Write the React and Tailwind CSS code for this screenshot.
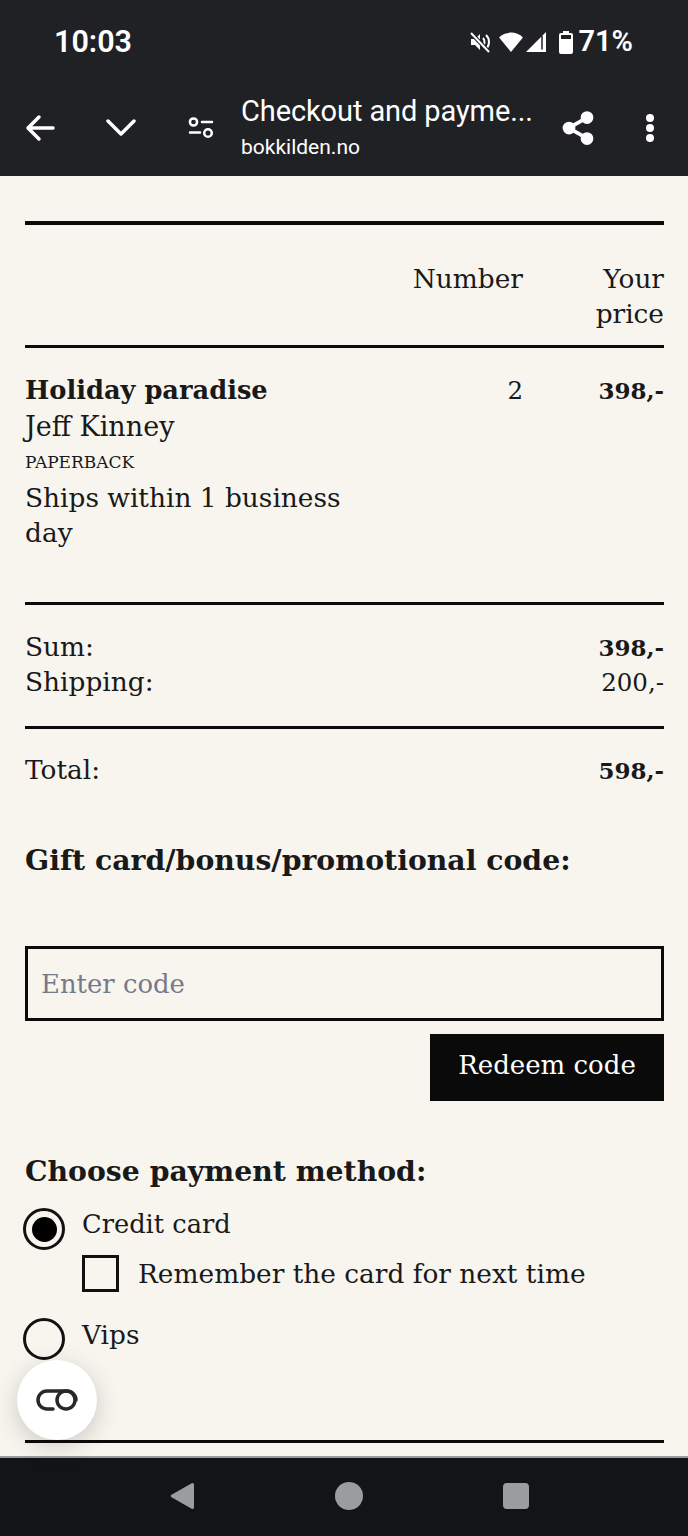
import { Share2 } from "lucide-react";

const serif = { fontFamily: '"DejaVu Serif", "Liberation Serif", serif' };

function StatusIcons() {
  return (
    <div className="flex items-center">
      {/* muted */}
      <svg width="22" height="24" viewBox="0 0 22 24" fill="none" stroke="white" strokeWidth="2">
        <path d="M2 9h4l5-5v16l-5-5H2z" fill="white" stroke="none" />
        <path d="M14 8c2 2 2 6 0 8M17 5c4 4 4 10 0 14" />
        <path d="M2 3l18 19" stroke="#202124" strokeWidth="4" />
        <path d="M2 3l18 19" />
      </svg>
      <svg width="26" height="22" viewBox="0 0 28 24" className="ml-[7px]">
        <path d="M1 7C8 0 20 0 27 7L14 23z" fill="white" />
      </svg>
      <svg width="22" height="22" viewBox="0 0 22 22" className="ml-[1px]">
        <path d="M21 1v20H1z" fill="white" />
        <path d="M17 5v13.500" stroke="#202124" strokeWidth="1.500" />
      </svg>
      <svg width="14" height="24" viewBox="0 0 14 24" className="ml-[12px]">
        <path d="M4 1h6v2h2a2 2 0 0 1 2 2v17a2 2 0 0 1-2 2H2a2 2 0 0 1-2-2V5a2 2 0 0 1 2-2h2z" fill="white" />
        <path d="M2 5h10v4H2z" fill="#202124" />
      </svg>
    </div>
  );
}

function Header() {
  return (
    <header className="bg-[#202124] h-[176px] text-white shrink-0" style={{ fontFamily: "Roboto, sans-serif" }}>
      <div className="h-[82px] pl-[54px] pr-[55px] pt-[2px] flex items-center justify-between">
        <span className="text-[30.500px] font-semibold">10:03</span>
        <div className="flex items-center gap-[5px]">
          <StatusIcons />
          <span className="text-[29px] font-semibold">71%</span>
        </div>
      </div>
      <div className="flex items-center h-[92px]">
        <svg width="30" height="28" viewBox="0 0 30 28" fill="none" stroke="white" strokeWidth="3.500" strokeLinecap="round" strokeLinejoin="round" className="ml-[25px]">
          <path d="M28 14H3M14 3L3 14l11 11" />
        </svg>
        <svg width="30" height="18" viewBox="0 0 30 18" fill="none" stroke="white" strokeWidth="3.500" strokeLinecap="round" strokeLinejoin="round" className="ml-[51px]">
          <path d="M2 2l13 13L28 2" />
        </svg>
        <svg width="26" height="22" viewBox="0 0 26 22" fill="none" stroke="white" strokeWidth="2.500" strokeLinecap="round" className="ml-[52px]">
          <circle cx="5.500" cy="5" r="3.600" />
          <circle cx="20" cy="16" r="3.800" />
          <path d="M14 5h10M2 15.500h10" />
        </svg>
        <div className="ml-[27px] w-[300px] mt-[1px]">
          <div className="text-[29px] leading-[36px] tracking-[-0.1px] whitespace-nowrap -mt-[4px]">Checkout and payme...</div>
          <div className="text-[21px] leading-[26px] mt-[5px]">bokkilden.no</div>
        </div>
        <Share2 size={36} fill="white" strokeWidth={2.5} className="ml-[19px]" />
        <svg width="10" height="30" viewBox="0 0 10 30" fill="white" className="ml-[49px]">
          <circle cx="5" cy="5" r="4" />
          <circle cx="5" cy="15" r="4" />
          <circle cx="5" cy="25" r="4" />
        </svg>
      </div>
    </header>
  );
}

function Rule({ className }) {
  return <div className={`bg-[#0b0b0b] ${className}`} />;
}

function Price({ value, bold }) {
  return <span className={bold ? "font-bold text-[23px]" : "text-[24.500px]"}>{value}</span>;
}

function Row({ left, right, rightBold }) {
  return (
    <div className="flex items-baseline justify-between h-[35px]">
      <span>{left}</span>
      <Price value={right} bold={rightBold} />
    </div>
  );
}

function Radio({ checked, className }) {
  return (
    <div className={`w-[42px] h-[42px] rounded-full border-[3.500px] border-[#111] flex items-center justify-center shrink-0 ${className}`}>
      {checked && <div className="w-[25px] h-[25px] rounded-full bg-black" />}
    </div>
  );
}

export default function App() {
  return (
    <div className="h-[1536px] w-[688px] flex flex-col bg-[#f8f5ef] overflow-hidden relative">
      <Header />
      <main className="flex-1 pl-[25px] pr-[24px] text-[#191919] text-[26.400px] leading-[35.500px] min-h-0" style={serif}>
        <Rule className="h-[4px] mt-[45px]" />
        <div className="flex h-[120px] pt-[36px] text-right leading-[35px]">
          <div className="w-[498px]">Number</div>
          <div className="flex-1">Your<br />price</div>
        </div>
        <Rule className="h-[3px]" />
        <div className="flex items-baseline h-[254px] pt-[24px]">
          <div className="w-[330px]">
            <div className="font-bold text-[25.700px] leading-[35px] whitespace-nowrap">Holiday paradise</div>
            <div className="text-[27px] mt-[1px]">Jeff Kinney</div>
            <div className="text-[17px] leading-[35px]">PAPERBACK</div>
            <div className="leading-[35px]">Ships within 1 business day</div>
          </div>
          <div className="w-[168px] text-right"><Price value="2" /></div>
          <div className="flex-1 text-right"><Price value="398,-" bold /></div>
        </div>
        <Rule className="h-[3px]" />
        <div className="h-[121px] pt-[24px]">
          <Row left="Sum:" right="398,-" rightBold />
          <Row left="Shipping:" right="200,-" />
        </div>
        <Rule className="h-[3px]" />
        <div className="pt-[23px]">
          <Row left="Total:" right="598,-" rightBold />
        </div>
        <h2 className="font-bold text-[28.300px] leading-[40px] mt-[53px] whitespace-nowrap">Gift card/bonus/promotional code:</h2>
        <input
          placeholder="Enter code"
          className="block w-full h-[75px] mt-[66px] border-[3px] border-[#0b0b0b] px-[13px] text-[25.900px] outline-none placeholder:text-[#757a8a]"
        />
        <div className="flex justify-end mt-[13px]">
          <button className="w-[234px] h-[67px] bg-[#0a0a0a] text-white text-[26px] pb-[3px]">Redeem code</button>
        </div>
        <h2 className="font-bold text-[28.300px] leading-[40px] mt-[50px]">Choose payment method:</h2>
        <div className="flex mt-[8px] -ml-[2px]">
          <Radio checked className="mt-[9px]" />
          <div className="ml-[17px] pt-[8px] text-[25.700px]">Credit card</div>
        </div>
        <div className="flex items-center ml-[57px] mt-[5px] h-[37px]">
          <div className="w-[37px] h-[37px] border-[3px] border-[#111] shrink-0" />
          <span className="ml-[19px] whitespace-nowrap">Remember the card for next time</span>
        </div>
        <div className="flex mt-[17px] -ml-[2px]">
          <Radio className="mt-[9px]" />
          <div className="ml-[17px] pt-[8px]">Vips</div>
        </div>
        <Rule className="h-[3px] mt-[80px]" />
      </main>
      <button className="absolute left-[17px] top-[1360px] w-[80px] h-[80px] rounded-full bg-white shadow-[0_6px_24px_rgba(0,0,0,0.18)] flex items-center justify-center">
        <svg width="42" height="22" viewBox="0 0 42 22" fill="none" stroke="#26282b" strokeWidth="3.500" strokeLinecap="round">
          <path d="M17 20h-6a9 9 0 0 1 0-18h20a9 9 0 0 1 9 9" />
          <circle cx="30" cy="11" r="9" />
        </svg>
      </button>
      <nav className="h-[80px] shrink-0 bg-[#111518] border-t-[2px] border-[#9a9a98] pb-[2px] flex items-center">
        <svg width="26" height="28" viewBox="0 0 26 28" className="ml-[170px]">
          <path d="M24 2.500v23a1.500 1.500 0 0 1-2.300 1.200L1.500 15.200a1.500 1.500 0 0 1 0-2.400L21.700 1.300A1.500 1.500 0 0 1 24 2.500z" fill="#9a9ca0" />
        </svg>
        <div className="w-[28px] h-[28px] rounded-full bg-[#9a9ca0] ml-[139px]" />
        <div className="w-[26px] h-[26px] rounded-[4px] bg-[#9a9ca0] ml-[140px]" />
      </nav>
    </div>
  );
}
